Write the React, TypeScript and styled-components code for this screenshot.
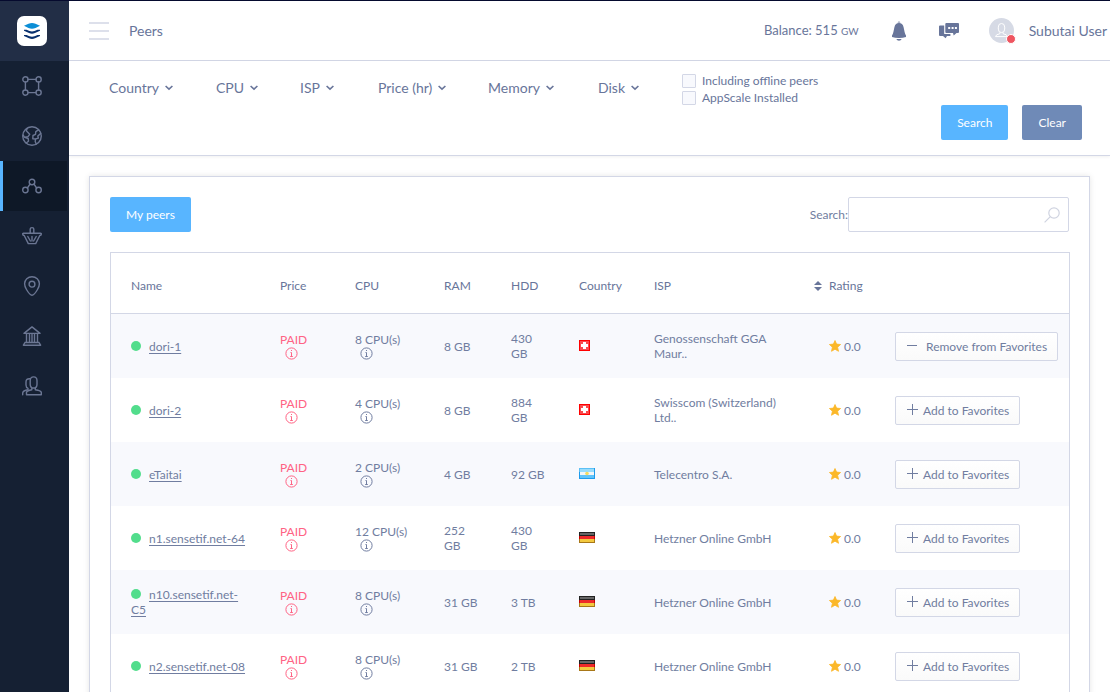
import React, { useState } from "react";
import styled, { createGlobalStyle } from "styled-components";

const c = {
  text: "#68759a",
  muted: "#707da0",
  line: "#d3d7e6",
  blue: "#58b5ff",
  slate: "#6f8ab7",
  pink: "#ff6384",
  stripe: "#f8f9fd",
};

const GlobalStyle = createGlobalStyle`
  * { box-sizing: border-box; }
  body {
    margin: 0;
    background: #fff;
    color: ${c.text};
    font-family: Lato, "Open Sans", sans-serif;
    font-size: 12px;
    line-height: 15px;
  }
  button, input { font: inherit; color: inherit; }
  button { cursor: pointer; }
  svg { display: block; flex: none; }
`;

const Shell = styled.div`
  display: flex;
  height: 100vh;
  overflow: hidden;
  border-top: 1px solid #050a2e;
`;

const Sidebar = styled.aside`
  flex: 0 0 69px;
  background: #152033;
`;

const LogoBox = styled.a`
  display: flex;
  align-items: center;
  height: 60px;
  padding-left: 17px;
  background: #222e46;
`;

const NavLink = styled.a<{ $active?: boolean }>`
  display: flex;
  align-items: center;
  height: 50px;
  margin-right: 2px;
  padding-left: 19px;
  border-left: 3px solid ${(p) => (p.$active ? c.blue : "transparent")};
  background: ${(p) => (p.$active ? "#0e1827" : "transparent")};
  color: #6b7693;
`;

const Page = styled.div`
  display: flex;
  flex: 1;
  flex-direction: column;
  min-width: 0;
`;

const Header = styled.header`
  display: flex;
  flex: none;
  align-items: center;
  height: 60px;
  padding: 0 3px 0 20px;
  border-bottom: 1px solid ${c.line};
  font-size: 14px;
  line-height: 20px;
`;

const MenuButton = styled.button`
  display: flex;
  flex-direction: column;
  justify-content: space-between;
  width: 20px;
  height: 18px;
  margin-right: 20px;
  padding: 0;
  border: 0;
  background: none;

  span { height: 2px; background: #dde0eb; }
`;

const Title = styled.h1`
  flex: 1;
  margin: 0;
  font-size: 14px;
  font-weight: 400;
`;

const Balance = styled.div`
  margin-right: 30px;
  font-size: 13px;

  b { font-size: 13px; font-weight: 400; }
  small { font-size: 10px; }
`;

const IconButton = styled.button`
  width: 20px;
  margin-right: 30px;
  padding: 0;
  border: 0;
  background: none;
`;

const Avatar = styled.span`
  position: relative;
  width: 25px;
  height: 25px;
  margin-right: 15px;
  border-radius: 50%;
  background: #d6dae5;
`;

const Status = styled.span`
  position: absolute;
  right: -2px;
  bottom: -1px;
  width: 10px;
  height: 10px;
  border: 1px solid #fff;
  border-radius: 50%;
  background: #ef5560;
`;

const FilterBar = styled.form`
  display: flex;
  flex: none;
  align-items: flex-start;
  height: 95px;
  padding: 11px 28px 15px 40px;
  border-bottom: 1px solid ${c.line};
  box-shadow: 0 1px 3px rgba(0, 0, 0, 0.06);
`;

const Filter = styled.button<{ $width: number }>`
  display: flex;
  align-items: center;
  gap: 6px;
  width: ${(p) => p.$width}px;
  padding: 6px 0;
  border: 0;
  background: none;
  font-size: 14px;
  line-height: 20px;
  white-space: nowrap;
`;

const Checks = styled.div`
  flex: 1;
`;

const CheckLabel = styled.label`
  display: flex;
  align-items: center;
  gap: 6px;
  height: 17px;
  color: ${c.text};
`;

const Checkbox = styled.input`
  appearance: none;
  width: 14px;
  height: 14px;
  margin: 0;
  border: 1px solid ${c.line};
  border-radius: 1px;
  background: ${c.stripe};

  &:checked { background: ${c.blue}; }
`;

const Actions = styled.div`
  display: flex;
  align-self: flex-end;
  gap: 14px;
`;

const Button = styled.button<{ $tone?: "slate" }>`
  height: 35px;
  padding: 0 16px;
  border: 0;
  border-radius: 2px;
  background: ${(p) => (p.$tone === "slate" ? c.slate : c.blue)};
  color: #fff;
`;

const Content = styled.main`
  flex: 1;
  min-height: 0;
  padding: 20px;
  overflow-y: auto;
  scrollbar-width: none;
`;

const Card = styled.section`
  padding: 20px 19px 20px 20px;
  border: 1px solid ${c.line};
  box-shadow: 0 0 6px rgba(0, 0, 0, 0.1);
`;

const Toolbar = styled.div`
  display: flex;
  justify-content: space-between;
  margin-bottom: 20px;
`;

const SearchLabel = styled.label`
  display: flex;
  align-items: center;
  color: ${c.muted};
`;

const SearchField = styled.span`
  display: flex;
  align-items: center;
  width: 221px;
  height: 35px;
  margin-right: 1px;
  padding-right: 8px;
  border: 1px solid ${c.line};
  border-radius: 2px;

  input {
    flex: 1;
    min-width: 0;
    padding: 0 10px;
    border: 0;
    outline: 0;
    background: none;
  }
`;

const Table = styled.table`
  width: 100%;
  border: 1px solid ${c.line};
  border-spacing: 0;
  table-layout: fixed;
`;

const Col = styled.col<{ $width?: number }>`
  width: ${(p) => (p.$width ? `${p.$width}px` : "auto")};
`;

const Th = styled.th`
  height: 61px;
  padding: 5px 0 0 20px;
  border-bottom: 1px solid ${c.line};
  font-weight: 400;
  text-align: left;
`;

const SortHeading = styled.span`
  display: flex;
  align-items: center;
  gap: 7px;
  margin-left: -15px;
`;

const Row = styled.tr`
  height: 64px;
  color: ${c.muted};

  &:nth-child(odd) { background: ${c.stripe}; }
`;

const Td = styled.td`
  padding: 0 13px 0 20px;
`;

const ActionTd = styled.td`
  padding: 0 10px 0 20px;
`;

const Dot = styled.span`
  display: inline-block;
  width: 10px;
  height: 10px;
  margin-right: 8px;
  border-radius: 50%;
  background: #52dd8c;
`;

const PeerLink = styled.a`
  color: inherit;
  text-underline-offset: 2px;
`;

const Metric = styled.div<{ $paid?: boolean }>`
  color: ${(p) => (p.$paid ? c.pink : "inherit")};
  line-height: 14px;

  svg { margin-left: 5px; }
`;

const Rating = styled.span`
  display: flex;
  align-items: center;
  gap: 3px;
`;

const FavoriteButton = styled.button<{ $wide: boolean }>`
  display: flex;
  align-items: center;
  gap: ${(p) => (p.$wide ? 8 : 5)}px;
  height: 29px;
  padding: 0 10px;
  border: 1px solid ${c.line};
  border-radius: 2px;
  background: linear-gradient(#fff, #fafafa);
  white-space: nowrap;
`;

const Logo = () => (
  <svg width="30" height="30" viewBox="0 0 30 30" aria-hidden="true">
    <rect width="30" height="30" rx="7" fill="#fff" />
    <path d="M7 9.800 11.500 7.700Q15 6.300 18.500 7.700L23 9.800 18.500 12Q15 13.400 11.500 12Z" fill="#0c8ed6" />
    <path d="M7 13.700H9.500L12.500 15.100Q15 16 17.500 15.100L20.500 13.700H23V14.700L18 17.100Q15 18.300 12 17.100L7 14.700Z" fill="#08306e" />
    <path d="M7 18.900H9.500L12.500 20.300Q15 21.200 17.500 20.300L20.500 18.900H23V19.900L18 22.300Q15 23.500 12 22.300L7 19.900Z" fill="#08306e" />
  </svg>
);

const NavIcon = ({ children }: { children: React.ReactNode }) => (
  <svg width="20" height="20" viewBox="0 0 20 20" fill="none" stroke="currentColor" strokeWidth="1.4" strokeLinejoin="round" strokeLinecap="round" aria-hidden="true">
    {children}
  </svg>
);

const nav = [
  {
    name: "Environments",
    icon: (
      <>
        <circle cx="3.4" cy="3.4" r="2.6" />
        <circle cx="16.6" cy="3.4" r="2.6" />
        <circle cx="3.4" cy="16.6" r="2.6" />
        <circle cx="16.6" cy="16.6" r="2.6" />
        <path d="M6 3.4h8M6 16.6h8M3.4 6v8M16.6 6v8" />
      </>
    ),
  },
  {
    name: "World",
    icon: (
      <>
        <circle cx="10" cy="10" r="9.3" />
        <path d="M5.2 2.3 4.3 4.8 7.7 8.3 5.8 10.8 2.6 11.3 1.2 9.2M2.600 11.3 6.2 12.5 6.5 15.2 4.2 17M16.5 3.8 13.8 5.6 13.5 8.3 11 9.5 10.8 12.8 13.5 13 13.2 15.5 14.2 18M18.8 7.4 15.8 10 16.4 12.2 13.5 13" />
      </>
    ),
  },
  {
    name: "Peers",
    active: true,
    icon: (
      <>
        <circle cx="10" cy="6" r="2.8" />
        <circle cx="3.4" cy="14" r="2.7" />
        <circle cx="16.6" cy="14" r="2.7" />
        <path d="M8 8.2 5.4 12M12 8.2l2.6 3.8" />
      </>
    ),
  },
  {
    name: "Bazaar",
    icon: (
      <path d="M8.200 7.200V3Q8.200 1.600 10 1.600T11.800 3v4.200M1.400 7.200h17.200q.8 0 .7.900-.1 1.300-1.500 1.400L13.700 17.600H6.300L2.200 9.500Q.8 9.400.7 8.100q-.1-.9.7-.9ZM5.800 10.500l2.600 4.500M10 10.500v4.500M14.200 10.500l-2.600 4.500" />
    ),
  },
  {
    name: "Locations",
    icon: (
      <>
        <path d="M10 19.3Q7.8 19.3 4.5 13.5 2.6 10.3 2.6 7.8a7.4 7.1 0 0 1 14.8 0q0 2.5-1.9 5.7Q12.2 19.3 10 19.3Z" />
        <circle cx="10" cy="8.2" r="2.9" />
      </>
    ),
  },
  {
    name: "Bank",
    icon: <path d="M10 .9 2 7.4h16ZM4.500 7.600v8.800M7.500 7.600v8.800M10 7.600v8.800M12.500 7.600v8.800M15.500 7.600v8.800M3 16.500h14M3 16.500l-1.600 2.700h17.200L17 16.500" />,
  },
  {
    name: "Users",
    icon: (
      <>
        <path d="M11.6.9Q15 .9 15 4.8v3.4Q15 12 11.6 12T8.2 8.2V4.8Q8.2.9 11.6.9ZM9.8 12v1.8q-4.8 1-5.3 2.4v2.6h14.8v-2.6q-.6-1.6-6-2.4V12" />
        <path d="M8 2.8Q4 2.4 4 6v3Q4 11.6 6 12.3v1.5Q1.2 14.6.7 16.8v2" />
      </>
    ),
  },
];

const Chevron = () => (
  <svg width="8" height="6" viewBox="0 0 8 6" fill="none" stroke="currentColor" strokeWidth="1.6" aria-hidden="true">
    <path d="m.6 1 3.4 3.2L7.4 1" />
  </svg>
);

const Bell = () => (
  <svg width="20" height="20" viewBox="0 0 20 20" fill="currentColor" aria-hidden="true">
    <path d="M8.500 1.500Q10-.5 11.500 1.500ZM10 2q3.600 0 4.600 4.200.5 2.400 1 4.700.5 2 1.400 3.500v1.700q-3 .9-7 .9t-7-.9v-1.700q.9-1.500 1.400-3.500.5-2.300 1-4.700Q6.400 2 10 2ZM7.300 18h5.400Q12 19.700 10 19.700T7.300 18Z" />
  </svg>
);

const Chat = () => (
  <svg width="20" height="20" viewBox="0 0 20 20" fill="currentColor" aria-hidden="true">
    <path d="M0 5.500Q0 4.500 1 4.500H5.200V13h6.200v2H8L6.600 17.300 4 15H1q-1 0-1-1Z" />
    <path d="M7.300 2H19q1 0 1 1v8q0 1-1 1h-1.500l-2.800 2.600L14 12H7.300q-1 0-1-1V3q0-1 1-1ZM9.200 6v2h2V6Zm3.400 0v2h2V6Zm3.300 0v2h2V6Z" fillRule="evenodd" />
  </svg>
);

const Person = () => (
  <svg width="25" height="25" viewBox="0 0 25 25" fill="none" stroke="#fff" aria-hidden="true">
    <path d="M12.500 5.500q3.200 0 3.200 3.600v2q0 3.500-3.200 3.500t-3.200-3.500v-2q0-3.600 3.200-3.600ZM10.800 14.600v1.200q-4 .5-4.300 2.800h12q-.3-2.300-4.300-2.800v-1.200" />
  </svg>
);

const Magnifier = () => (
  <svg width="16" height="16" viewBox="0 0 16 16" fill="none" stroke="#cfd3e0" strokeWidth="1.200" aria-hidden="true">
    <circle cx="10" cy="6" r="5.200" />
    <path d="M6.300 9.700.6 15.400" />
  </svg>
);

const SortArrows = () => (
  <svg width="8" height="10" viewBox="0 0 8 10" fill="currentColor" aria-hidden="true">
    <path d="M4 0 8 4H0ZM4 10 0 6h8Z" />
  </svg>
);

const Info = () => (
  <svg width="13" height="13" viewBox="0 0 13 13" fill="none" stroke="currentColor" aria-hidden="true">
    <circle cx="6.500" cy="6.500" r="5.600" />
    <path d="M5.500 5.500h1V9.500M5.200 9.500h2.600M6 3.500h1" />
  </svg>
);

const Star = () => (
  <svg width="12" height="12" viewBox="0 0 12 12" fill="#fbb829" stroke="#fbb829" strokeWidth=".8" strokeLinejoin="round" aria-hidden="true">
    <path d="m6 .5 1.600 3.600 4 .4L8.600 7.200 9.500 11.300 6 9.200 2.500 11.300 3.400 7.200.4 4.500l4-.4Z" />
  </svg>
);

const Sign = ({ minus }: { minus: boolean }) => (
  <svg width="12" height="12" viewBox="0 0 12 12" stroke="currentColor" aria-hidden="true">
    <path d={minus ? "M1 5.500h10" : "M1 5.500h11M6.500 0v11"} />
  </svg>
);

const Flag = ({ code }: { code: string }) => {
  if (code === "ch")
    return (
      <svg width="11" height="12" viewBox="0 0 11 12" role="img" aria-label="Switzerland">
        <path d="M0 0h11v11H0Z" fill="#f00" />
        <path d="M1 1h9v9H1Z" fill="#fa4a4e" />
        <path d="M4 2h3v2h2v3H7v2H4V7H2V4h2Z" fill="#fff" />
      </svg>
    );
  if (code === "ar")
    return (
      <svg width="16" height="12" viewBox="0 0 16 12" role="img" aria-label="Argentina">
        <path d="M0 0h16v11H0Z" fill="#1e9bec" />
        <path d="M0 0h15v4H0Z" fill="#5cc0f5" />
        <path d="M1 1h14v3H1Z" fill="#98dcfc" />
        <path d="M1 7h14v3H1Z" fill="#60c4fa" />
        <path d="M1 4h14v3H1Z" fill="#f3f6f8" />
        <circle cx="8" cy="5.500" r="1.800" fill="#f3dc62" />
      </svg>
    );
  return (
    <svg width="16" height="12" viewBox="0 0 16 12" role="img" aria-label="Germany">
      <path d="M0 0h16v4H0Z" fill="#222" />
      <path d="M1 1h14v2H1Z" fill="#666" />
      <path d="M0 4h16v3H0Z" fill="#c90000" />
      <path d="M1 4h14v3H1Z" fill="#ee2a2a" />
      <path d="M0 7h16v4H0Z" fill="#a87718" />
      <path d="M1 7h14v3H1Z" fill="#f3c93f" />
    </svg>
  );
};

const filters = [
  { name: "Country", width: 107 },
  { name: "CPU", width: 84 },
  { name: "ISP", width: 78 },
  { name: "Price (hr)", width: 110 },
  { name: "Memory", width: 110 },
  { name: "Disk", width: 84 },
];

const peers = [
  { name: "dori-1", cpu: 8, ram: "8 GB", hdd: "430 GB", flag: "ch", isp: "Genossenschaft GGA Maur..", favorite: true },
  { name: "dori-2", cpu: 4, ram: "8 GB", hdd: "884 GB", flag: "ch", isp: "Swisscom (Switzerland) Ltd..", favorite: false },
  { name: "eTaitai", cpu: 2, ram: "4 GB", hdd: "92 GB", flag: "ar", isp: "Telecentro S.A.", favorite: false },
  { name: "n1.sensetif.net-64", cpu: 12, ram: "252 GB", hdd: "430 GB", flag: "de", isp: "Hetzner Online GmbH", favorite: false },
  { name: "n10.sensetif.net-C5", cpu: 8, ram: "31 GB", hdd: "3 TB", flag: "de", isp: "Hetzner Online GmbH", favorite: false },
  { name: "n2.sensetif.net-08", cpu: 8, ram: "31 GB", hdd: "2 TB", flag: "de", isp: "Hetzner Online GmbH", favorite: false },
];

export default function App() {
  const [favorites, setFavorites] = useState(peers.map((p) => p.favorite));
  const toggle = (index: number) => setFavorites(favorites.map((f, i) => (i === index ? !f : f)));

  return (
    <>
      <GlobalStyle />
      <Shell>
        <Sidebar>
          <LogoBox href="#" aria-label="Home">
            <Logo />
          </LogoBox>
          <nav>
            {nav.map((item) => (
              <NavLink key={item.name} href="#" aria-label={item.name} $active={item.active}>
                <NavIcon>{item.icon}</NavIcon>
              </NavLink>
            ))}
          </nav>
        </Sidebar>
        <Page>
          <Header>
            <MenuButton aria-label="Menu">
              <span />
              <span />
              <span />
            </MenuButton>
            <Title>Peers</Title>
            <Balance>
              Balance: <b>515</b> <small>GW</small>
            </Balance>
            <IconButton aria-label="Notifications">
              <Bell />
            </IconButton>
            <IconButton aria-label="Messages">
              <Chat />
            </IconButton>
            <Avatar>
              <Person />
              <Status />
            </Avatar>
            <span>Subutai User</span>
          </Header>
          <FilterBar onSubmit={(e) => e.preventDefault()}>
            {filters.map((f) => (
              <Filter key={f.name} type="button" $width={f.width}>
                {f.name}
                <Chevron />
              </Filter>
            ))}
            <Checks>
              <CheckLabel>
                <Checkbox type="checkbox" />
                Including offline peers
              </CheckLabel>
              <CheckLabel>
                <Checkbox type="checkbox" />
                AppScale Installed
              </CheckLabel>
            </Checks>
            <Actions>
              <Button type="submit">Search</Button>
              <Button type="reset" $tone="slate">
                Clear
              </Button>
            </Actions>
          </FilterBar>
          <Content>
            <Card>
              <Toolbar>
                <Button type="button">My peers</Button>
                <SearchLabel>
                  Search:
                  <SearchField>
                    <input type="search" />
                    <Magnifier />
                  </SearchField>
                </SearchLabel>
              </Toolbar>
              <Table>
                <colgroup>
                  <Col $width={149} />
                  <Col $width={75} />
                  <Col $width={89} />
                  <Col $width={67} />
                  <Col $width={68} />
                  <Col $width={75} />
                  <Col />
                  <Col $width={66} />
                  <Col $width={194} />
                </colgroup>
                <thead>
                  <tr>
                    <Th>Name</Th>
                    <Th>Price</Th>
                    <Th>CPU</Th>
                    <Th>RAM</Th>
                    <Th>HDD</Th>
                    <Th>Country</Th>
                    <Th>ISP</Th>
                    <Th>
                      <SortHeading>
                        <SortArrows />
                        Rating
                      </SortHeading>
                    </Th>
                    <Th aria-label="Favorites" />
                  </tr>
                </thead>
                <tbody>
                  {peers.map((peer, i) => (
                    <Row key={peer.name}>
                      <Td>
                        <Dot />
                        <PeerLink href="#">{peer.name}</PeerLink>
                      </Td>
                      <Td>
                        <Metric $paid>
                          PAID
                          <Info />
                        </Metric>
                      </Td>
                      <Td>
                        <Metric>
                          {peer.cpu} CPU(s)
                          <Info />
                        </Metric>
                      </Td>
                      <Td>{peer.ram}</Td>
                      <Td>{peer.hdd}</Td>
                      <Td>
                        <Flag code={peer.flag} />
                      </Td>
                      <Td>{peer.isp}</Td>
                      <Td>
                        <Rating>
                          <Star />
                          0.0
                        </Rating>
                      </Td>
                      <ActionTd>
                        <FavoriteButton type="button" $wide={favorites[i]} onClick={() => toggle(i)}>
                          <Sign minus={favorites[i]} />
                          {favorites[i] ? "Remove from Favorites" : "Add to Favorites"}
                        </FavoriteButton>
                      </ActionTd>
                    </Row>
                  ))}
                </tbody>
              </Table>
            </Card>
          </Content>
        </Page>
      </Shell>
    </>
  );
}
